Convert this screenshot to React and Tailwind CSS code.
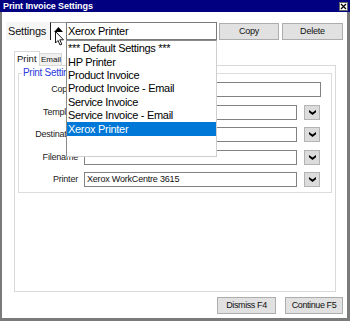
import React from "react";

const Chevron = () => (
  <svg width="7" height="5" viewBox="0 0 7 5">
    <polygon points="0,0 3.5,2.4 7,0 7,2.2 3.5,5 0,2.2" fill="#000" />
  </svg>
);

const DropBtn = () => (
  <div className="ml-[7px] w-[16px] h-[15px] bg-[#dcdcdc] border border-[#b4b4b4] flex items-center justify-center">
    <Chevron />
  </div>
);

const Row = ({ label, children }) => (
  <div className="flex items-center h-[15px]">
    <div className="w-[59px] text-right text-[9px] leading-none text-[#222] tracking-[-0.2px]">{label}</div>
    <div className="ml-[6px] flex items-center">{children}</div>
  </div>
);

const Input = ({ w, children }) => (
  <div className={`${w} h-[15px] border border-[#828282] bg-white flex items-center pl-[2px] text-[9px] leading-none text-[#111] tracking-[-0.2px] whitespace-nowrap overflow-hidden`}>
    {children}
  </div>
);

export default function App() {
  const items = [
    "*** Default Settings ***",
    "HP Printer",
    "Product Invoice",
    "Product Invoice - Email",
    "Service Invoice",
    "Service Invoice - Email",
    "Xerox Printer",
  ];
  return (
    <div className="w-[350px] h-[321px] bg-white flex flex-col overflow-hidden font-['Liberation_Sans',Arial,sans-serif]">
      <div className="h-[12px] bg-[#000080] flex items-center justify-between pl-[3px] pr-[2px]">
        <span className="text-white font-bold text-[9px] leading-none tracking-[-0.1px]">Print Invoice Settings</span>
        <div className="w-[9px] h-[9px] bg-white border border-[#666] flex items-center justify-center">
          <svg width="7" height="7" viewBox="0 0 7 7">
            <path d="M1 1 L6 6 M6 1 L1 6" stroke="#000" strokeWidth="1.3" />
          </svg>
        </div>
      </div>
      <div className="relative flex-1 flex flex-col border-l-2 border-r-[3px] border-b-[3px] border-[#7b7b7b]">
        {/* settings row */}
        <div className="flex h-[18px] mt-[10px] ml-[4px]">
          <div className="w-[44px] bg-[#f6f6f6] flex items-center pl-[2px] text-[11px] leading-none text-[#111] tracking-[-0.2px]">Settings</div>
          <div className="w-[16px] border-l border-l-[#222] border-t border-t-[#999] flex justify-center pt-[4px]">
            <svg width="9" height="5" viewBox="0 0 9 5">
              <polygon points="0,5 4.5,0 9,5" fill="#000" />
            </svg>
          </div>
          <div className="w-[151px] border border-[#7a7a7a] bg-white flex items-center pl-[1px] text-[11px] leading-none text-[#000] tracking-[-0.3px]">Xerox Printer</div>
          <div className="ml-[2px] w-[60px] h-[17px] self-end bg-[#e1e1e1] border border-[#adadad] flex items-center justify-center text-[9px] leading-none text-[#111] tracking-[-0.2px]">Copy</div>
          <div className="ml-[3px] w-[61px] h-[17px] self-end bg-[#e1e1e1] border border-[#adadad] flex items-center justify-center text-[9px] leading-none text-[#111] tracking-[-0.2px]">Delete</div>
        </div>

        {/* tabs */}
        <div className="flex items-end h-[15px] mt-[10px] ml-[12px]">
          <div className="w-[26px] h-[15px] bg-white border border-b-0 border-[#d9d9d9] flex items-center pl-[2px] text-[9.5px] leading-none text-[#111] relative z-10 -mb-px pb-px">Print</div>
          <div className="-ml-px w-[23px] h-[12px] bg-[#f0f0f0] border border-b-0 border-[#d9d9d9] flex items-center pl-[1px] text-[8px] leading-none text-[#111]">Email</div>
        </div>

        {/* panel */}
        <div className="ml-[12px] w-[322px] h-[227px] border border-[#d9d9d9] bg-white">
          <div className="relative ml-[3px] mt-[7px] w-[314px] h-[120px] border border-[#dcdcdc]">
            <div className="absolute left-[3px] top-[-6px] bg-white px-px text-[10px] leading-none text-[#2d3be0] tracking-[-0.3px]">Print Settings</div>
            <div className="flex flex-col gap-[7.5px] pt-[8px]">
              <Row label="Copies"><Input w="w-[237px]" /></Row>
              <Row label="Template"><Input w="w-[213px]" /><DropBtn /></Row>
              <Row label="Destination"><Input w="w-[213px]" /><DropBtn /></Row>
              <Row label="Filename"><Input w="w-[213px]" /><DropBtn /></Row>
              <Row label="Printer"><Input w="w-[213px]">Xerox WorkCentre 3615</Input><DropBtn /></Row>
            </div>
          </div>
        </div>

        {/* bottom buttons */}
        <div className="flex justify-end mt-[5px] mr-[4px] gap-[9px]">
          <div className="w-[59px] h-[17px] bg-[#e1e1e1] border border-[#adadad] flex items-center justify-center text-[9px] leading-none text-[#111] tracking-[-0.4px]">Dismiss F4</div>
          <div className="w-[58px] h-[17px] bg-[#e1e1e1] border border-[#adadad] flex items-center justify-center text-[9px] leading-none text-[#111] tracking-[-0.4px]">Continue F5</div>
        </div>

        {/* dropdown list */}
        <div className="absolute left-[64px] top-[28px] w-[151px] h-[117px] bg-white border border-[#8a8a8a] border-r-[#cfcfcf] border-b-[#cfcfcf] pt-px z-20">
          {items.map((it, i) => (
            <div
              key={it}
              className={`h-[13.4px] flex items-center pl-px text-[11px] leading-none tracking-[-0.3px] whitespace-nowrap ${i === items.length - 1 ? "bg-[#0078d7] text-white" : "text-black"}`}
            >
              {it}
            </div>
          ))}
        </div>

        {/* cursor */}
        <svg className="absolute left-[53px] top-[19px] z-30" width="10" height="15" viewBox="0 0 10 15">
          <path d="M0.5 0.5 L0.5 12 L3 9.5 L5 14 L6.8 13.2 L4.8 8.8 L8.5 8.8 Z" fill="#fff" stroke="#000" strokeWidth="0.9" strokeLinejoin="miter" />
        </svg>
      </div>
    </div>
  );
}
